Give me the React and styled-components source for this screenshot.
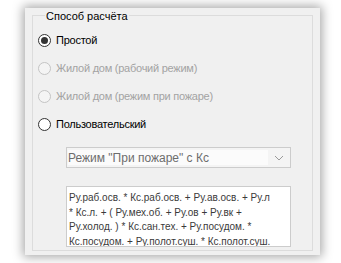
import React from "react";
import { styled, createGlobalStyle } from "styled-components";

const Global = createGlobalStyle`
  body {
    margin: 0;
    background: #ffffff;
    font-family: "Liberation Sans", Arial, sans-serif;
  }
`;

const Page = styled.div`
  width: 341px;
  height: 263px;
  padding: 8px 0 0 25px;
  box-sizing: border-box;
  overflow: hidden;
`;

const Panel = styled.div`
  width: 295px;
  height: 247px;
  box-sizing: border-box;
  background: #f0f0f0;
  padding: 0 7px 4px 7px;
  box-shadow: 0 0 10px 2px rgba(0, 0, 0, 0.35);
  display: flex;
`;

const Group = styled.fieldset`
  margin: 0;
  flex: 1;
  border: 1px solid #dcdcdc;
  padding: 3px 0 0 5px;
  min-width: 0;
`;

const Legend = styled.legend`
  font-size: 11px;
  line-height: 13px;
  color: #000;
  margin-left: 7px;
  padding: 2px 1px 0;
`;

const Row = styled.div`
  height: 28px;
  display: flex;
  align-items: center;
  gap: 5px;
  font-size: 11px;
  letter-spacing: -0.25px;
  color: ${(p) => (p.$disabled ? "#a3a3a3" : "#000")};
`;

const Dot = styled.span`
  width: 13px;
  height: 13px;
  box-sizing: border-box;
  border-radius: 50%;
  border: 1px solid ${(p) => (p.$disabled ? "#c4c4c4" : "#333")};
  background: ${(p) => (p.$disabled ? "#f4f4f4" : "#fff")};
  display: flex;
  align-items: center;
  justify-content: center;

  &::after {
    content: "";
    width: 7px;
    height: 7px;
    border-radius: 50%;
    background: #333;
    display: ${(p) => (p.$checked ? "block" : "none")};
  }
`;

const Combo = styled.div`
  margin: 9px 0 0 28px;
  width: 225px;
  height: 21px;
  box-sizing: border-box;
  border: 1px solid #cccccc;
  background: #f4f4f4;
  display: flex;
  align-items: center;
  padding: 2px 2px 2px 1px;
`;

const ComboText = styled.div`
  flex: 1;
  height: 100%;
  background: #fbfbfb;
  font-size: 12px;
  color: #6d6d6d;
  display: flex;
  align-items: center;
`;

const Arrow = styled.svg`
  width: 18px;
  height: 10px;
  margin-left: 2px;
`;

const Formula = styled.div`
  margin: 18px 0 0 28px;
  width: 225px;
  height: 61px;
  box-sizing: border-box;
  border: 1px solid #cccccc;
  background: #ffffff;
  padding: 4px 0 0 2px;
  overflow: hidden;
  font-size: 10px;
  line-height: 14.6px;
  color: #3a3a3a;
  white-space: nowrap;
`;

const lines = [
  "Ру.раб.осв. * Кс.раб.осв. + Ру.ав.осв. + Ру.л",
  "* Кс.л. + ( Ру.мех.об. + Ру.ов + Ру.вк +",
  "Ру.холод. ) * Кс.сан.тех. + Ру.посудом. *",
  "Кс.посудом. + Ру.полот.суш. * Кс.полот.суш.",
  "+ ( Ру.раб.обор. + Ру.пр.обор. ) * Кс.пр.",
];

const options = [
  { label: "Простой", checked: true },
  { label: "Жилой дом (рабочий режим)", disabled: true },
  { label: "Жилой дом (режим при пожаре)", disabled: true },
  { label: "Пользовательский" },
];

export default function App() {
  return (
    <>
      <Global />
      <Page>
        <Panel>
          <Group>
            <Legend>Способ расчёта</Legend>
            {options.map((o) => (
              <Row key={o.label} $disabled={o.disabled}>
                <Dot $checked={o.checked} $disabled={o.disabled} />
                {o.label}
              </Row>
            ))}
            <Combo>
              <ComboText>Режим "При пожаре" с Кс</ComboText>
              <Arrow viewBox="0 0 18 10">
                <path d="M5 3 L9 7 L13 3" fill="none" stroke="#9a9a9a" strokeWidth="1" />
              </Arrow>
            </Combo>
            <Formula>
              {lines.map((l) => (
                <div key={l}>{l}</div>
              ))}
            </Formula>
          </Group>
        </Panel>
      </Page>
    </>
  );
}
